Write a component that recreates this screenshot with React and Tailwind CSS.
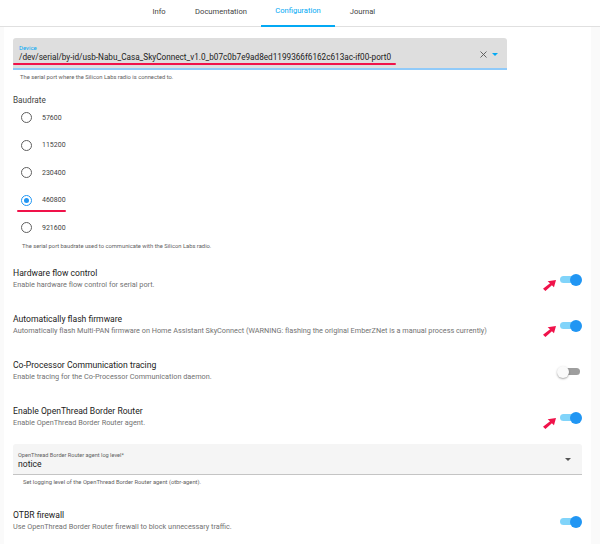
import { useState } from "react";

const tabs = [
  ["Info", "w-[44px]"],
  ["Documentation", "w-[80px]"],
  ["Configuration", "w-[74px]"],
  ["Journal", "w-[55px]"],
];
const rates = ["57600", "115200", "230400", "460800", "921600"];

function Toggle({ on }) {
  return (
    <div className="relative w-[22px] h-[12px] flex items-center">
      <div className={`w-[20px] h-[7px] rounded-full ${on ? "bg-[#81d4fa]" : "bg-[#9e9e9e]"}`} />
      <div
        className={`absolute top-0 w-[12px] h-[12px] rounded-full ${
          on ? "right-0 bg-[#2196f3]" : "left-[-3px] bg-[#fafafa] shadow-[0_1px_2px_rgba(0,0,0,0.35)]"
        }`}
      />
    </div>
  );
}

function Arrow({ className }) {
  return (
    <svg className={className} width="15" height="13" viewBox="0 0 16 14">
      <path d="M15 1 L6 2.5 L8.6 4.6 L1 10.5 L3.6 13 L10.6 6.6 L12.8 9 Z" fill="#f0124a" />
    </svg>
  );
}

function SwitchRow({ title, desc, on, h = "h-[46px]", arrow }) {
  return (
    <div className={`relative flex justify-between items-start ${h}`}>
      <div className="pt-[1px]">
        <div className="text-[8.6px] leading-[12px] text-[#212121]">{title}</div>
        <div className="text-[7.3px] leading-[12px] text-[#727272]">{desc}</div>
      </div>
      <div className="pt-[8px]">
        <Toggle on={on} />
      </div>
      {arrow && <Arrow className="absolute right-[25px] top-[13px]" />}
    </div>
  );
}

export default function App() {
  const [rate] = useState("460800");

  return (
    <div className="w-[600px] h-[544px] overflow-hidden bg-[#fafafa] font-['Roboto',sans-serif]">
      <div className="h-[27px] bg-white border-b border-[#e0e0e0] flex pl-[137px]">
        {tabs.map(([t, w]) => (
          <div
            key={t}
            className={`${w} h-[27px] flex items-center justify-center text-[7.6px] pb-[3px] ${
              t === "Configuration" ? "text-[#03a9f4] border-b-2 border-[#03a9f4]" : "text-[#424242]"
            }`}
          >
            {t}
          </div>
        ))}
      </div>

      <div className="ml-[4px] w-[587px] h-[517px] bg-white pl-[9px] pr-[9px] pt-[11px]">
        <div className="w-[494px]">
          <div className="relative h-[32px] bg-[#dedede] rounded-t-[3px] border-b-2 border-[#90caf9] pl-[6px] pt-[6px]">
            <div className="text-[6px] leading-[8px] text-[#03a9f4]">Device</div>
            <div className="text-[8.2px] leading-[11px] text-[#212121] whitespace-nowrap">
              /dev/serial/by-id/usb-Nabu_Casa_SkyConnect_v1.0_b07c0b7e9ad8ed1199366f6162c613ac-if00-port0
            </div>
            <div className="absolute left-0 top-[25px] w-[383px] h-[2px] rounded-full bg-[#f0124a]" />
            <svg className="absolute right-[20px] top-[13px]" width="7" height="7" viewBox="0 0 7 7">
              <path d="M0.5 0.5 L6.5 6.5 M6.5 0.5 L0.5 6.5" stroke="#555" strokeWidth="0.9" />
            </svg>
            <svg className="absolute right-[9px] top-[15px]" width="6" height="4" viewBox="0 0 6 4">
              <path d="M0 0 L6 0 L3 3 Z" fill="#03a9f4" />
            </svg>
          </div>
          <div className="pl-[7px] pt-[3px] text-[5.8px] leading-[9px] text-[#616161]">
            The serial port where the Silicon Labs radio is connected to.
          </div>
        </div>

        <div className="mt-[13px] text-[8.2px] leading-[11px] text-[#424242]">Baudrate</div>
        <div className="mt-[-2px]">
          {rates.map((r) => (
            <div key={r} className="relative h-[27.5px] flex items-center pl-[8px]">
              <div
                className={`w-[11px] h-[11px] rounded-full border-[1.5px] flex items-center justify-center ${
                  r === rate ? "border-[#2196f3]" : "border-[#5f5f5f]"
                }`}
              >
                {r === rate && <div className="w-[5px] h-[5px] rounded-full bg-[#2196f3]" />}
              </div>
              <span className="ml-[10px] text-[7px] text-[#424242]">{r}</span>
              {r === rate && (
                <div className="absolute left-[4px] top-[23px] w-[49px] h-[2px] rounded-full bg-[#f0124a]" />
              )}
            </div>
          ))}
        </div>
        <div className="pl-[9px] text-[5.8px] leading-[9px] text-[#616161]">
          The serial port baudrate used to communicate with the Silicon Labs radio.
        </div>

        <div className="mt-[15px]">
          <SwitchRow title="Hardware flow control" desc="Enable hardware flow control for serial port." on arrow />
          <SwitchRow
            title="Automatically flash firmware"
            desc="Automatically flash Multi-PAN firmware on Home Assistant SkyConnect (WARNING: flashing the original EmberZNet is a manual process currently)"
            on
            arrow
          />
          <SwitchRow title="Co-Processor Communication tracing" desc="Enable tracing for the Co-Processor Communication daemon." />
          <SwitchRow
            title="Enable OpenThread Border Router"
            desc="Enable OpenThread Border Router agent."
            on
            arrow
            h="h-[32px]"
          />
        </div>

        <div className="mt-[8px] relative h-[31px] bg-[#f5f5f5] rounded-t-[3px] border-b border-[#c4c4c4] pl-[5px] pt-[7px]">
          <div className="text-[5.6px] leading-[8px] text-[#616161]">OpenThread Border Router agent log level*</div>
          <div className="text-[8.6px] leading-[11px] text-[#212121]">notice</div>
          <svg className="absolute right-[11px] top-[14px]" width="6" height="4" viewBox="0 0 6 4">
            <path d="M0 0 L6 0 L3 3 Z" fill="#555" />
          </svg>
        </div>
        <div className="pl-[10px] pt-[3px] text-[5.8px] leading-[9px] text-[#616161]">
          Set logging level of the OpenThread Border Router agent (otbr-agent).
        </div>

        <div className="mt-[21px]">
          <SwitchRow title="OTBR firewall" desc="Use OpenThread Border Router firewall to block unnecessary traffic." on />
        </div>
      </div>
    </div>
  );
}
